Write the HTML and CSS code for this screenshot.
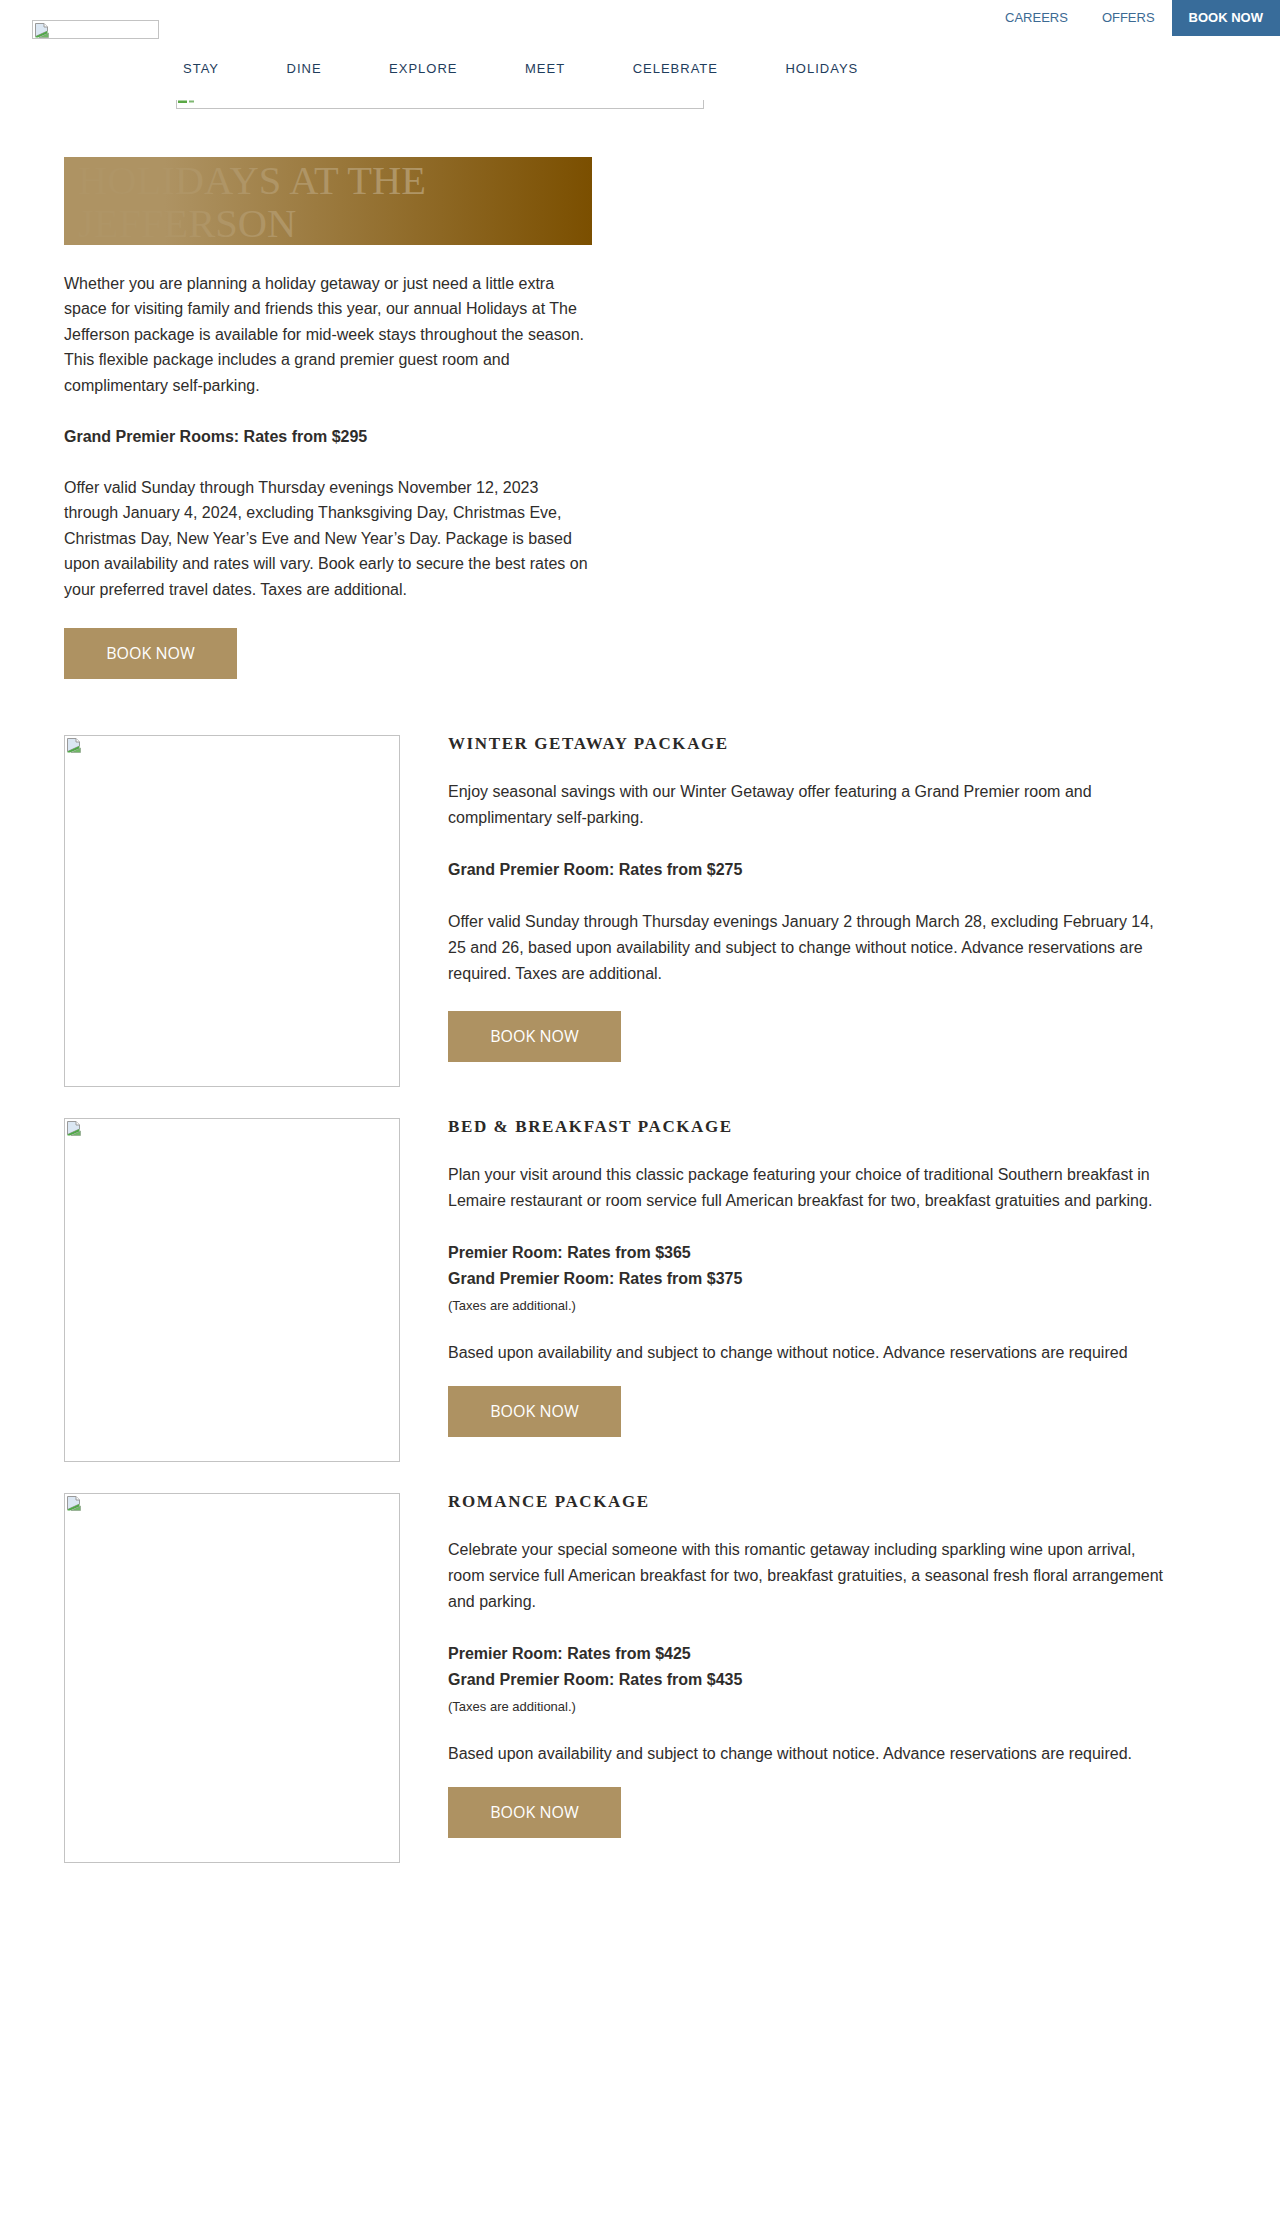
FILE: index.html
```html
<!DOCTYPE html>
<html lang="en">
<head>
<meta charset="utf-8">
<title>Holidays at The Jefferson</title>
<link rel="stylesheet" href="styles.css">
</head>
<body>
<header class="site-header">
  <a class="logo" href="#">
    <svg class="broken-icon" viewBox="0 0 16 16" width="16" height="16"><path d="M1.5 1.5H10L13.5 5V9L1.5 14.5Z" fill="#dbe7f3" stroke="#9a9a9a"/><path d="M10 1.5V5H13.5" fill="#fff" stroke="#9a9a9a"/><path d="M1.5 14.5L13.5 9V11.5L4 15.5H1.5Z" fill="#4fa847"/><path d="M5 15.5L14.5 11V15.5Z" fill="#6fb865" stroke="#8a9a88" stroke-width="0.6"/></svg>
  </a>
  <div class="header-right">
    <div class="utility">
      <a class="util-link" href="#">CAREERS</a>
      <a class="util-link" href="#">OFFERS</a>
      <a class="util-book" href="#">BOOK NOW</a>
    </div>
    <nav class="main-nav">
      <a href="#">STAY</a>
      <a href="#">DINE</a>
      <a href="#">EXPLORE</a>
      <a href="#">MEET</a>
      <a href="#">CELEBRATE</a>
      <a href="#">HOLIDAYS</a>
    </nav>
  </div>
</header>
<div class="nav-strip">
  <svg class="strip-frag" width="18" height="4" viewBox="0 0 18 4"><rect x="0" y="0.5" width="9" height="2.5" fill="#5aa845"/><rect x="11" y="0.5" width="5" height="2" fill="#7fb872"/></svg>
</div>

<main class="content">
  <section class="intro">
    <div class="banner"><h1>HOLIDAYS AT THE JEFFERSON</h1></div>
    <p>Whether you are planning a holiday getaway or just need a little extra space for visiting family and friends this year, our annual Holidays at The Jefferson package is available for mid-week stays throughout the season. This flexible package includes a grand premier guest room and complimentary self-parking.</p>
    <p><strong>Grand Premier Rooms: Rates from $295</strong></p>
    <p>Offer valid Sunday through Thursday evenings November 12, 2023 through January 4, 2024, excluding Thanksgiving Day, Christmas Eve, Christmas Day, New Year’s Eve and New Year’s Day. Package is based upon availability and rates will vary. Book early to secure the best rates on your preferred travel dates. Taxes are additional.</p>
    <a class="btn" href="#">BOOK NOW</a>
  </section>

  <section class="packages">
    <article class="package">
      <div class="package-img">
        <svg class="broken-icon" viewBox="0 0 16 16" width="16" height="16"><path d="M1.5 1.5H10L13.5 5V9L1.5 14.5Z" fill="#dbe7f3" stroke="#9a9a9a"/><path d="M10 1.5V5H13.5" fill="#fff" stroke="#9a9a9a"/><path d="M1.5 14.5L13.5 9V11.5L4 15.5H1.5Z" fill="#4fa847"/><path d="M5 15.5L14.5 11V15.5Z" fill="#6fb865" stroke="#8a9a88" stroke-width="0.6"/></svg>
      </div>
      <div class="package-body">
        <h2>WINTER GETAWAY PACKAGE</h2>
        <p>Enjoy seasonal savings with our Winter Getaway offer featuring a Grand Premier room and complimentary self-parking.</p>
        <p><strong>Grand Premier Room: Rates from $275</strong></p>
        <p class="last">Offer valid Sunday through Thursday evenings January 2 through March 28, excluding February 14, 25 and 26, based upon availability and subject to change without notice. Advance reservations are required. Taxes are additional.</p>
        <a class="btn" href="#">BOOK NOW</a>
      </div>
    </article>

    <article class="package">
      <div class="package-img">
        <svg class="broken-icon" viewBox="0 0 16 16" width="16" height="16"><path d="M1.5 1.5H10L13.5 5V9L1.5 14.5Z" fill="#dbe7f3" stroke="#9a9a9a"/><path d="M10 1.5V5H13.5" fill="#fff" stroke="#9a9a9a"/><path d="M1.5 14.5L13.5 9V11.5L4 15.5H1.5Z" fill="#4fa847"/><path d="M5 15.5L14.5 11V15.5Z" fill="#6fb865" stroke="#8a9a88" stroke-width="0.6"/></svg>
      </div>
      <div class="package-body">
        <h2>BED &amp; BREAKFAST PACKAGE</h2>
        <p>Plan your visit around this classic package featuring your choice of traditional Southern breakfast in Lemaire restaurant or room service full American breakfast for two, breakfast gratuities and parking.</p>
        <p class="rates"><strong>Premier Room: Rates from $365</strong><br><strong>Grand Premier Room: Rates from $375</strong><br><small>(Taxes are additional.)</small></p>
        <p class="last tight">Based upon availability and subject to change without notice. Advance reservations are required</p>
        <a class="btn" href="#">BOOK NOW</a>
      </div>
    </article>

    <article class="package">
      <div class="package-img">
        <svg class="broken-icon" viewBox="0 0 16 16" width="16" height="16"><path d="M1.5 1.5H10L13.5 5V9L1.5 14.5Z" fill="#dbe7f3" stroke="#9a9a9a"/><path d="M10 1.5V5H13.5" fill="#fff" stroke="#9a9a9a"/><path d="M1.5 14.5L13.5 9V11.5L4 15.5H1.5Z" fill="#4fa847"/><path d="M5 15.5L14.5 11V15.5Z" fill="#6fb865" stroke="#8a9a88" stroke-width="0.6"/></svg>
      </div>
      <div class="package-body">
        <h2>ROMANCE PACKAGE</h2>
        <p>Celebrate your special someone with this romantic getaway including sparkling wine upon arrival, room service full American breakfast for two, breakfast gratuities, a seasonal fresh floral arrangement and parking.</p>
        <p class="rates"><strong>Premier Room: Rates from $425</strong><br><strong>Grand Premier Room: Rates from $435</strong><br><small>(Taxes are additional.)</small></p>
        <p class="last tight">Based upon availability and subject to change without notice. Advance reservations are required.</p>
        <a class="btn" href="#">BOOK NOW</a>
      </div>
    </article>
  </section>
</main>
</body>
</html>
```

FILE: styles.css
```css
* { box-sizing: border-box; }

html, body {
  margin: 0;
  padding: 0;
  background: #ffffff;
}

body {
  font-family: "Liberation Sans", Arial, sans-serif;
  font-size: 16px;
  color: #2f2d2b;
  min-height: 2215px;
}

a { text-decoration: none; }

.broken-icon { display: block; }

/* ---------- header ---------- */
.site-header {
  display: flex;
  align-items: flex-start;
}

.logo {
  display: block;
  margin: 20px 0 0 32px;
  width: 127px;
  height: 19px;
  border: 1px solid #c3c3c3;
  padding: 1px;
  flex: none;
}

.header-right {
  flex: 1;
  min-width: 0;
}

.utility {
  display: flex;
  justify-content: flex-end;
  height: 36px;
}

.util-link {
  padding: 0 17px;
  line-height: 36px;
  font-size: 13px;
  color: #3c6a93;
}

.util-book {
  padding: 0 17px;
  line-height: 36px;
  font-size: 13px;
  font-weight: 700;
  color: #ffffff;
  background: #386c9a;
}

.main-nav {
  display: flex;
  gap: 67.5px;
  margin-top: 23px;
  padding-left: 24px;
  line-height: 20px;
}

.main-nav a {
  font-size: 13px;
  letter-spacing: 1px;
  color: #1f3d5c;
}

.nav-strip {
  margin: 21px 0 0 176px;
  width: 528px;
  height: 9px;
  border: 1px solid #c3c3c3;
  border-top: none;
  overflow: hidden;
}

.strip-frag { display: block; margin-left: 1px; }

/* ---------- content ---------- */
.content {
  padding: 0 64px;
  margin-top: 48px;
}

.intro { width: 528px; }

.banner {
  height: 88px;
  background: linear-gradient(90deg, #ae9363 19%, #7b4f00 100%);
  overflow: hidden;
}

.banner h1 {
  margin: 0;
  padding: 2px 0 0 14px;
  font-family: "Liberation Serif", "Times New Roman", serif;
  font-weight: 400;
  font-size: 40.5px;
  line-height: 43px;
  color: #af9566;
}

.intro p {
  margin: 25.5px 0 0;
  line-height: 25.5px;
}

.btn {
  display: block;
  width: 173px;
  height: 51px;
  line-height: 51px;
  text-align: center;
  background: #ae9262;
  color: #ffffff;
  font-family: "Open Sans", "Liberation Sans", sans-serif;
  font-size: 16px;
}

.intro .btn { margin-top: 26px; }

.packages {
  display: flex;
  flex-direction: column;
  gap: 31px;
  margin-top: 56px;
}

.package {
  display: flex;
  gap: 48px;
  align-items: stretch;
}

.package-img {
  width: 336px;
  flex: none;
  border: 1px solid #c3c3c3;
  padding: 1px;
}

.package-body {
  width: 720px;
  padding-bottom: 25px;
}

.package-body h2 {
  margin: 0 0 26px;
  font-family: "Liberation Serif", "Times New Roman", serif;
  font-weight: 700;
  font-size: 17px;
  line-height: 18px;
  letter-spacing: 1.6px;
  color: #2b2927;
}

.package-body p {
  margin: 0 0 26px;
  line-height: 26px;
}

.package-body p.rates { margin-bottom: 21px; }
.package-body p.last { margin-bottom: 24px; }
.package-body p.tight { margin-bottom: 20px; }

.package-body small { font-size: 13px; }

strong { font-weight: 700; }
```
